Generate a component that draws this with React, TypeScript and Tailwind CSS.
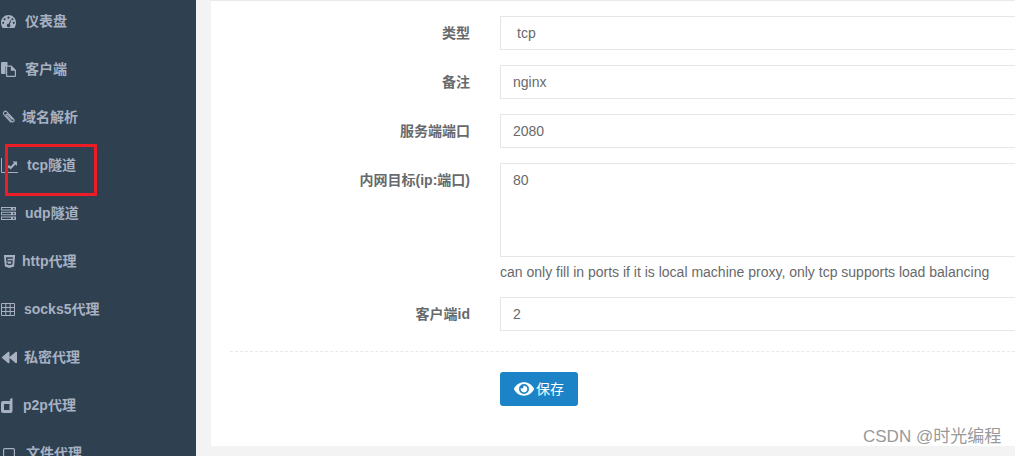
import type { ReactNode } from "react";
import { FaEye, FaHtml5, FaBackward } from "react-icons/fa";

const FONT = "font-['Liberation_Sans','Noto_Sans_CJK_SC',sans-serif]";

function DashIcon() {
  return (
    <svg viewBox="0 0 15 13" className="h-[13px] w-[15px]" fill="currentColor">
      <path
        fillRule="evenodd"
        d="M7.5 0C3.4 0 0 3.3 0 7.4c0 2 .6 3.9 1.6 5.6h11.8c1-1.7 1.6-3.6 1.6-5.6C15 3.3 11.6 0 7.5 0zM7.5 1.6a1 1 0 1 1 0 2.2 1 1 0 0 1 0-2.2zM3.6 3.2a1 1 0 1 1 0 2.1 1 1 0 0 1 0-2.1zM11.4 3.2a1 1 0 1 1 0 2.1 1 1 0 0 1 0-2.1zM2.2 6.8a1 1 0 1 1 0 2.1 1 1 0 0 1 0-2.1zM12.8 6.8a1 1 0 1 1 0 2.1 1 1 0 0 1 0-2.1zM9.4 5.2l.9.4-1.5 3.6c.5.5.7 1.1.5 1.8-.3 1-1.3 1.5-2.2 1.2-1-.3-1.5-1.3-1.2-2.2.2-.8 1-1.3 1.9-1.2z"
      />
    </svg>
  );
}

function FilesIcon() {
  return (
    <svg viewBox="0 0 15 15" className="h-[15px] w-[15px]" fill="currentColor">
      <path d="M0 1a1 1 0 0 1 1-1h5.5v4H5.5a1 1 0 0 0-1 1v7H1a1 1 0 0 1-1-1z" />
      <path
        fillRule="evenodd"
        d="M6 3.5h4.5L15 8v6a1 1 0 0 1-1 1H6a1 1 0 0 1-1-1V4.500a1 1 0 0 1 1-1zM6.200 4.700v9.100h7.600V8.800H9.800V4.700z"
      />
    </svg>
  );
}

function ClipIcon() {
  return (
    <svg viewBox="0 0 13 14" className="h-[14px] w-[13px]" fill="none" stroke="currentColor" strokeWidth="1.1">
      <path d="M9 12.500 2 4.700C.4 2.900 2.900.1 4.800 1.800l7 7.500c1.200 1.400-.6 3.400-2 2.200L4.300 5.500c-.7-.8.3-1.800 1.100-1.200l5 5.200" />
    </svg>
  );
}

function LineIcon() {
  return (
    <svg viewBox="0 0 17 15" className="h-[15px] w-[17px]">
      <path d="M.5 0v14.500H17" fill="none" stroke="currentColor" strokeWidth="1" />
      <path d="M4 11l4-4 1.500 1.500 3.500-3.500-1.500-1.500H16v4.500l-1.500-1.500-5 5L8 9.500l-3 3z" fill="currentColor" />
    </svg>
  );
}

function ServerIcon() {
  return (
    <svg viewBox="0 0 15 13" className="h-[13px] w-[15px]" fill="currentColor">
      <path
        fillRule="evenodd"
        d="M0 0h15v3.400H0zM1 1v1.400h9V1zM12 1v1.400h1.500V1zM0 4.800h15v3.400H0zM1 5.800v1.400h9V5.800zM12 5.800v1.400h1.500V5.800zM0 9.600h15V13H0zM1 10.600V12h9v-1.400zM12 10.600V12h1.500v-1.400z"
      />
    </svg>
  );
}

function TableIcon() {
  return (
    <svg viewBox="0 0 14 13" className="h-[13px] w-[14px]" fill="none" stroke="currentColor" strokeWidth="1">
      <path d="M.5.500h13v12H.5zM.5 4.500h13M.5 8.500h13M4.800 .5v12M9.200 .5v12" />
    </svg>
  );
}

function P2pIcon() {
  return (
    <svg viewBox="0 0 12 15" className="h-[15px] w-[12px]" fill="currentColor">
      <path
        fillRule="evenodd"
        d="M2 3h7V1l2.500-1v13a2 2 0 0 1-2 2H2a2 2 0 0 1-2-2V5a2 2 0 0 1 2-2zm1 3v6h5.500V6z"
      />
    </svg>
  );
}

function FileIcon() {
  return (
    <svg viewBox="0 0 12 11" className="h-[11px] w-[12px]" fill="none" stroke="currentColor" strokeWidth="1.200">
      <rect x=".6" y=".6" width="10.800" height="9.800" rx="1" />
    </svg>
  );
}

const NAV: { label: string; icon: ReactNode; slot: string }[] = [
  { label: "仪表盘", icon: <DashIcon />, slot: "w-[24px] -ml-[1px]" },
  { label: "客户端", icon: <FilesIcon />, slot: "w-[24px] -ml-[1px]" },
  { label: "域名解析", icon: <ClipIcon />, slot: "w-[20px]" },
  { label: "tcp隧道", icon: <LineIcon />, slot: "w-[26px] -ml-[1px]" },
  { label: "udp隧道", icon: <ServerIcon />, slot: "w-[24px] -ml-[1px]" },
  { label: "http代理", icon: <FaHtml5 size={15} />, slot: "w-[20px]" },
  { label: "socks5代理", icon: <TableIcon />, slot: "w-[23px] -ml-[1px]" },
  { label: "私密代理", icon: <FaBackward size={15} />, slot: "w-[22px]" },
  { label: "p2p代理", icon: <P2pIcon />, slot: "w-[22px] -ml-[1px]" },
  { label: "文件代理", icon: <FileIcon />, slot: "w-[24px] pl-[1px]" },
];

function Field({ label, children }: { label: string; children: ReactNode }) {
  return (
    <div className="flex items-start">
      <label className="w-[259px] shrink-0 pt-[9px] text-right text-[14px] leading-[16px] font-bold text-[#676a6c]">
        {label}
      </label>
      <div className="ml-[30px] w-[600px] shrink-0">{children}</div>
    </div>
  );
}

function Box({ value, indent }: { value: string; indent?: boolean }) {
  return (
    <div
      className={`h-[34px] border border-[#e5e6e7] bg-white text-[14px] leading-[32px] text-[#676a6c] ${
        indent ? "pl-[16px]" : "pl-[12px]"
      }`}
    >
      {value}
    </div>
  );
}

export default function App() {
  return (
    <div className={`relative flex h-[456px] w-[1015px] overflow-hidden bg-[#f3f3f4] ${FONT}`}>
      <aside className="flex h-full w-[196px] shrink-0 flex-col overflow-hidden bg-[#2f4050] pl-[2px]">
        <div className="flex flex-col">
          {NAV.map((n) => (
            <div
              key={n.label}
              className="flex h-[48px] shrink-0 items-center text-[14px] font-bold text-[#a7b1c2] first:mt-[-3px]"
            >
              <span className={`flex shrink-0 ${n.slot}`}>{n.icon}</span>
              <span>{n.label}</span>
            </div>
          ))}
        </div>
      </aside>

      <main className="ml-[15px] min-w-0 flex-1 overflow-hidden">
        <div className="h-[446px] border-t border-[#e7eaec] bg-white pt-[15px]">
          <div className="flex flex-col gap-[15px]">
            <Field label="类型">
              <Box value="tcp" indent />
            </Field>
            <Field label="备注">
              <Box value="nginx" />
            </Field>
            <Field label="服务端端口">
              <Box value="2080" />
            </Field>
            <Field label="内网目标(ip:端口)">
              <div className="h-[94px] border border-[#e5e6e7] bg-white pl-[12px] text-[14px] leading-[32px] text-[#676a6c]">
                80
              </div>
              <p className="mt-[5px] text-[14px] leading-[20px] whitespace-nowrap text-[#676a6c]">
                can only fill in ports if it is local machine proxy, only tcp supports load balancing
              </p>
            </Field>
            <Field label="客户端id">
              <Box value="2" />
            </Field>
          </div>
          <div className="mt-[20px] ml-[19px] border-t border-dashed border-[#e7eaec]" />
          <div className="mt-[20px] ml-[289px]">
            <button className="flex h-[34px] w-[78px] items-center justify-center gap-[2px] rounded-[3px] bg-[#1c84c6] text-[14px] text-white">
              <FaEye size={20} />
              <span>保存</span>
            </button>
          </div>
        </div>
      </main>

      <div className="absolute top-[144px] left-[5px] h-[52px] w-[92px] rounded-[1px] border-[3px] border-[#ee1c25]" />
      <div className="absolute top-[427px] left-[863px] text-[17px] leading-[20px] text-[#999999]">
        CSDN @时光编程
      </div>
    </div>
  );
}
